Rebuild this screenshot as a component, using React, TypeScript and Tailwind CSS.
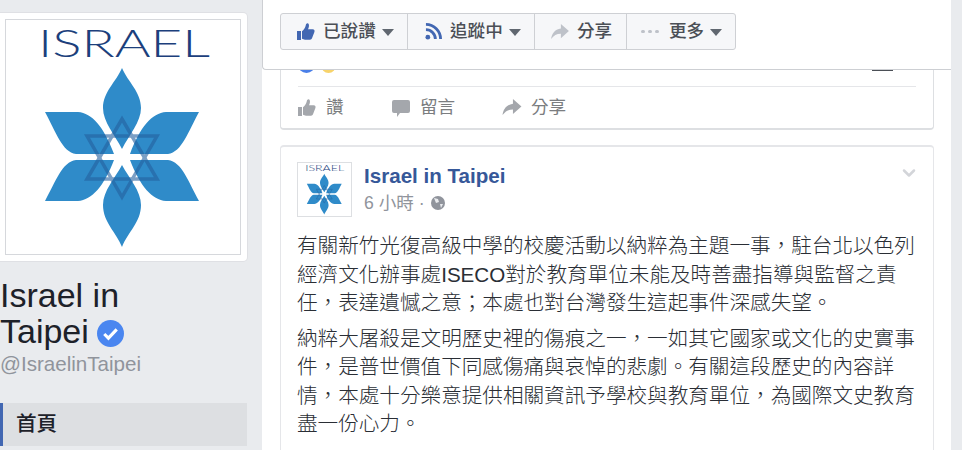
import React from 'react';
import { ChevronDown } from 'lucide-react';

const cjk = "font-['Liberation_Sans','Noto_Sans_CJK_TC',sans-serif]";

const Logo: React.FC<{ className: string }> = ({ className }) => (
  <svg viewBox="6 20 234 234" className={className}>
    <text
      x="38"
      y="57"
      fontFamily="Lato, sans-serif"
      fontSize="37"
      fontWeight="300"
      textLength="172"
      lengthAdjust="spacingAndGlyphs"
      fill="#1c3f7c"
    >
      ISRAEL
    </text>
    <g fill="#2f8bc9">
      <path d="M122 68C116 82 103 92 103 108C103 122 115 135 122 149C129 135 141 122 141 108C141 92 128 82 122 68Z" />
      <path d="M122 247C116 232 103 222 103 205C103 191 115 178 122 165C129 178 141 191 141 205C141 222 128 232 122 247Z" />
      <path d="M45 112L78 112C92 113 104 127 114 154L76 154C62 152 56 132 45 112Z" />
      <path d="M199 112L166 112C152 113 140 127 130 154L168 154C182 152 188 132 199 112Z" />
      <path d="M45 201L78 201C92 200 104 186 114 160L76 160C62 162 56 181 45 201Z" />
      <path d="M199 201L166 201C152 200 140 186 130 160L168 160C182 162 188 181 199 201Z" />
    </g>
    <g fill="none" stroke="#24609f" strokeWidth="3.500" opacity="0.6">
      <path d="M122 119L157 179L87 179Z" />
      <path d="M122 197L157 136L87 136Z" />
    </g>
  </svg>
);

const Like: React.FC<{ className: string }> = ({ className }) => (
  <svg viewBox="0 0 18 18" className={className} fill="currentColor">
    <path d="M0 8h4v9H0zM5 8.200c1.600-1 3-3 3.600-5.200.2-1 .4-2.600 1.600-2.800 1.500-.2 2 1.600 1.700 3.200-.2 1-.5 2-.9 2.800h4.700c1.500 0 2.300 1.400 1.700 2.700l-2.400 6.400c-.3.900-1 1.400-2 1.400H8c-1.200 0-2-.6-3-.9z" />
  </svg>
);

const Share: React.FC<{ className: string }> = ({ className }) => (
  <svg viewBox="0 0 20 18" className={className} fill="currentColor">
    <path d="M11 0l9 8-9 8v-5C6 11 3 13 0 17c.6-6 4-11 11-12z" />
  </svg>
);

const Caret = () => <span className="ml-[6px] mt-[2px] border-x-[6px] border-t-[7px] border-x-transparent border-t-[#606770]" />;

const lineClass = 'flex h-full items-center border-r border-[#ced0d4] last:border-r-0';

const App: React.FC = () => {
  return (
    <div className={`flex h-[450px] w-[962px] overflow-hidden bg-[#e9ebee] text-[#1d2129] ${cjk}`}>
      <aside className="w-[262px] shrink-0 pt-[13px]">
        <div className="h-[248px] w-[247px] rounded-r-[4px] bg-white pl-[5px] pt-[6px] shadow-[0_0_0_1px_#dfe0e4]">
          <div className="h-[236px] w-[236px] border border-[#d6d8dc] bg-white">
            <Logo className="h-full w-full" />
          </div>
        </div>
        <h1 className="mt-[16px] w-[200px] text-[34px] leading-[36px]">
          Israel in Taipei
          <svg viewBox="0 0 26 26" className="ml-[8px] inline-block h-[27px] w-[27px] align-[-4px]">
            <circle cx="13" cy="13" r="13" fill="#4a86f0" />
            <path d="M7 13.500l4 4 8-8.500" fill="none" stroke="#ffffff" strokeWidth="3" />
          </svg>
        </h1>
        <p className="mt-[3px] text-[20.6px] leading-[24px] text-[#90949c]">@IsraelinTaipei</p>
        <nav className="mt-[27px] flex h-[43px] w-[247px] items-center border-l-[3px] border-[#4267b2] bg-[#dddfe2] pl-[13px] text-[20.6px] font-medium">
          首頁
        </nav>
      </aside>

      <main className="w-[689px] shrink-0 bg-white">
        <header className="relative z-10 h-[70px] rounded-bl-[4px] border-b border-l border-[#cdcfd3] bg-white pl-[17px] pt-[13px]">
          <div className="flex h-[37px] w-[456px] items-center rounded-[3px] border border-[#ced0d4] bg-[#f6f7f9] text-[17.6px] font-medium text-[#4b4f56]">
            <div className={`${lineClass} w-[127px] pl-[16px]`}>
              <Like className="mr-[8px] h-[18px] w-[18px] text-[#4267b2]" />
              已說讚
              <Caret />
            </div>
            <div className={`${lineClass} w-[127px] pl-[17px]`}>
              <svg viewBox="0 0 18 18" className="mr-[8px] h-[17px] w-[17px] text-[#4267b2]" fill="none" stroke="currentColor" strokeWidth="3">
                <circle cx="3" cy="15" r="2.500" fill="currentColor" stroke="none" />
                <path d="M1 7a10 10 0 0 1 10 10M1 1.500a15.500 15.500 0 0 1 15.500 15.500" />
              </svg>
              追蹤中
              <Caret />
            </div>
            <div className={`${lineClass} w-[92px] pl-[16px]`}>
              <Share className="mr-[8px] h-[16px] w-[18px] text-[#bec2c9]" />
              分享
            </div>
            <div className={`${lineClass} flex-1 pl-[14px]`}>
              <span className="mr-[10px] flex w-[18px] justify-between">
                <i className="h-[3px] w-[4px] rounded-full bg-[#bec2c9]" />
                <i className="h-[3px] w-[4px] rounded-full bg-[#bec2c9]" />
                <i className="h-[3px] w-[4px] rounded-full bg-[#bec2c9]" />
              </span>
              更多
              <Caret />
            </div>
          </div>
        </header>

        <section className="ml-[18px] h-[60px] w-[654px] rounded-b-[4px] border-x border-b-2 border-[#dddfe2] px-[17px]">
          <div className="flex h-[17px] items-start justify-between border-b border-[#e5e6e9]">
            <div className="flex gap-[6px]">
              <span className="-mt-[14px] h-[17px] w-[17px] rounded-full bg-[#4a7fe8]" />
              <span className="-mt-[14px] h-[17px] w-[15px] rounded-full bg-[#f7d36b]" />
            </div>
            <span className="mr-[23px] h-px w-[21px] bg-[#4b4f56]" />
          </div>
          <div className="flex h-[41px] items-center text-[17.6px] text-[#7b7d80]">
            <Like className="mr-[10px] h-[18px] w-[18px] text-[#a4a7ac]" />
            <span className="w-[66px]">讚</span>
            <svg viewBox="0 0 18 18" className="mr-[10px] h-[18px] w-[18px] text-[#a4a7ac]" fill="currentColor">
              <path d="M2 1h14a2 2 0 0 1 2 2v9a2 2 0 0 1-2 2h-8l-3 4v-4H2a2 2 0 0 1-2-2V3a2 2 0 0 1 2-2z" />
            </svg>
            <span className="w-[82px]">留言</span>
            <Share className="mr-[9px] h-[17px] w-[20px] text-[#a4a7ac]" />
            <span>分享</span>
          </div>
        </section>

        <article className="relative ml-[18px] mt-[15px] h-[320px] w-[654px] rounded-t-[4px] border-x border-t-2 border-[#e5e6e9] px-[16px] pt-[15px]">
          <ChevronDown className="absolute right-[14px] top-[16px] h-[20px] w-[20px] text-[#d3d5d9]" strokeWidth={3} />
          <div className="flex">
            <div className="h-[55px] w-[55px] border border-[#dddfe2]">
              <Logo className="h-full w-full" />
            </div>
            <div className="ml-[12px]">
              <p className="text-[20.6px] font-bold leading-[28px] text-[#365899]">Israel in Taipei</p>
              <p className="flex items-center text-[17.6px] leading-[26px] text-[#90949c]">
                6 小時 ·
                <svg viewBox="0 0 14 14" className="ml-[6px] h-[14px] w-[14px]">
                  <circle cx="7" cy="7" r="7" fill="#90949c" />
                  <path d="M3 2l4 1 1 3-3 1zM9 8l3 0-2 4z" fill="#e9ebee" />
                </svg>
              </p>
            </div>
          </div>
          <div className="mt-[15px] w-[622px] text-[20.6px] font-light leading-[28.5px] text-[#2a2e35]">
            <p>有關新竹光復高級中學的校慶活動以納粹為主題一事，駐台北以色列經濟文化辦事處ISECO對於教育單位未能及時善盡指導與監督之責任，表達遺憾之意；本處也對台灣發生這起事件深感失望。</p>
            <p className="mt-[7px]">納粹大屠殺是文明歷史裡的傷痕之一，一如其它國家或文化的史實事件，是普世價值下同感傷痛與哀悼的悲劇。有關這段歷史的內容詳情，本處十分樂意提供相關資訊予學校與教育單位，為國際文史教育盡一份心力。</p>
          </div>
        </article>
      </main>
    </div>
  );
};

export default App;
